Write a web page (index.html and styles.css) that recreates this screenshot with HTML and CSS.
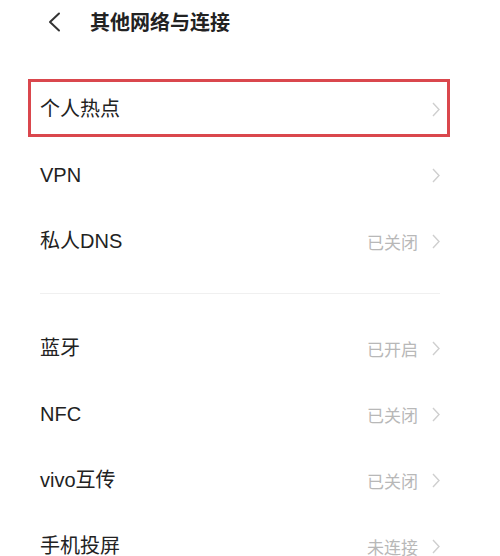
FILE: index.html
```html
<!DOCTYPE html>
<html lang="zh-CN">
<head>
<meta charset="utf-8">
<title>其他网络与连接</title>
<link rel="stylesheet" href="styles.css">
</head>
<body>
<header class="header">
  <svg class="back" width="15" height="20" viewBox="0 0 15 20"><polyline points="12,1.5 3,10 12,18.5" fill="none" stroke="#333" stroke-width="2" stroke-linecap="round" stroke-linejoin="round"/></svg>
  <h1 class="title">其他网络与连接</h1>
</header>
<ul class="list">
  <li class="row highlight"><span class="label">个人热点</span><span class="right"><svg class="chev" width="8" height="15" viewBox="0 0 8 15"><polyline points="1,1 7,7.5 1,14" fill="none" stroke="#cfcfcf" stroke-width="1.4"/></svg></span></li>
  <li class="row"><span class="label">VPN</span><span class="right"><svg class="chev" width="8" height="15" viewBox="0 0 8 15"><polyline points="1,1 7,7.5 1,14" fill="none" stroke="#cfcfcf" stroke-width="1.4"/></svg></span></li>
  <li class="row"><span class="label">私人DNS</span><span class="right"><span class="value">已关闭</span><svg class="chev" width="8" height="15" viewBox="0 0 8 15"><polyline points="1,1 7,7.5 1,14" fill="none" stroke="#cfcfcf" stroke-width="1.4"/></svg></span></li>
</ul>
<div class="sep"></div>
<ul class="list second">
  <li class="row"><span class="label">蓝牙</span><span class="right"><span class="value">已开启</span><svg class="chev" width="8" height="15" viewBox="0 0 8 15"><polyline points="1,1 7,7.5 1,14" fill="none" stroke="#cfcfcf" stroke-width="1.4"/></svg></span></li>
  <li class="row"><span class="label">NFC</span><span class="right"><span class="value">已关闭</span><svg class="chev" width="8" height="15" viewBox="0 0 8 15"><polyline points="1,1 7,7.5 1,14" fill="none" stroke="#cfcfcf" stroke-width="1.4"/></svg></span></li>
  <li class="row"><span class="label">vivo互传</span><span class="right"><span class="value">已关闭</span><svg class="chev" width="8" height="15" viewBox="0 0 8 15"><polyline points="1,1 7,7.5 1,14" fill="none" stroke="#cfcfcf" stroke-width="1.4"/></svg></span></li>
  <li class="row"><span class="label">手机投屏</span><span class="right"><span class="value">未连接</span><svg class="chev" width="8" height="15" viewBox="0 0 8 15"><polyline points="1,1 7,7.5 1,14" fill="none" stroke="#cfcfcf" stroke-width="1.4"/></svg></span></li>
</ul>
</body>
</html>
```
FILE: styles.css
```css
html, body {
  margin: 0;
  padding: 0;
  background: #ffffff;
  overflow: hidden;
}
body {
  width: 500px;
  height: 556px;
  font-family: "Liberation Sans", "Noto Sans CJK SC", sans-serif;
  color: #222222;
}
.header {
  height: 44px;
  display: flex;
  align-items: center;
  padding-left: 47px;
}
.back {
  display: block;
  margin-right: 28px;
}
.title {
  margin: 0;
  font-size: 20px;
  font-weight: bold;
  color: #222;
  line-height: 1;
  font-family: "Noto Sans CJK SC", sans-serif;
}
.list {
  list-style: none;
  margin: 32px 0 0 0;
  padding: 0 60px 0 40px;
}
.list.second {
  margin-top: 21px;
}
.row {
  position: relative;
  height: 66px;
  display: flex;
  align-items: center;
  justify-content: space-between;
}
.label {
  font-size: 20px;
  line-height: 1;
}
.right {
  display: flex;
  align-items: center;
}
.value {
  font-size: 17px;
  line-height: 1;
  color: #b8b8b8;
  margin-right: 14px;
  font-family: "Noto Sans CJK SC", sans-serif;
}
.chev {
  display: block;
}
.highlight::after {
  content: "";
  position: absolute;
  left: -12px;
  right: -10px;
  top: 3px;
  bottom: 5px;
  border: 3px solid #da474d;
}
.sep {
  height: 1px;
  margin: 19px 60px 0 40px;
  background: #f0f0f0;
}
```
